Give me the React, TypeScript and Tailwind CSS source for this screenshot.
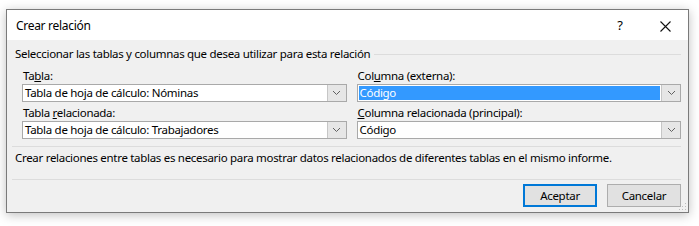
import React from "react";

const font = { fontFamily: '"Segoe UI", "Noto Sans", "Open Sans", sans-serif' };

function Chevron() {
  return (
    <svg width="9" height="6" viewBox="0 0 9 6" className="block">
      <path d="M1 1 L4.5 4.5 L8 1" fill="none" stroke="#606060" strokeWidth="1" />
    </svg>
  );
}

function Combo({ value, selected }: { value: string; selected?: boolean }) {
  return (
    <div className="flex h-[18px] border border-[#a9a9a9] bg-white">
      <div className="flex flex-1 items-center p-px">
        <div
          className={
            selected
              ? "flex h-full w-full items-center bg-[#3399ff] pl-[1px] text-white"
              : "flex h-full w-full items-center pl-[1px] text-black"
          }
        >
          {value}
        </div>
      </div>
      <div className="flex w-[19px] items-center justify-center border-l border-[#c6c6c6] bg-[#e6e6e6]">
        <Chevron />
      </div>
    </div>
  );
}

function Field({ label, value, selected }: { label: React.ReactNode; value: string; selected?: boolean }) {
  return (
    <div className="flex flex-col">
      <div className="h-[17px] leading-[17px] pl-[1px]">{label}</div>
      <Combo value={value} selected={selected} />
    </div>
  );
}

function Grip() {
  return (
    <svg width="8" height="8" viewBox="0 0 8 8" className="absolute bottom-[1px] right-[1px]">
      <rect x="6" y="0" width="1" height="1" fill="#bcbcbc" />
      <rect x="3" y="3" width="1" height="1" fill="#bcbcbc" />
      <rect x="6" y="3" width="1" height="1" fill="#bcbcbc" />
      <rect x="0" y="6" width="1" height="1" fill="#bcbcbc" />
      <rect x="3" y="6" width="1" height="1" fill="#bcbcbc" />
      <rect x="6" y="6" width="1" height="1" fill="#bcbcbc" />
    </svg>
  );
}

export default function App() {
  return (
    <div
      className="h-[226px] w-[699px] bg-white pl-[6px] pt-[9px] text-[11.5px] tracking-[-0.3px] text-black"
      style={font}
    >
      <div className="relative flex h-[204px] w-[683px] flex-col border border-[#7a7a7a] bg-[#f0f0f0] shadow-[0_2px_10px_rgba(0,0,0,0.25)]">
        <div className="flex h-[30px] items-center bg-white pl-[9px] pt-[2px]">
          <span className="flex-1 text-[12px]">Crear relación</span>
          <span className="w-[20px] text-center text-[13px]">?</span>
          <svg width="11" height="11" viewBox="0 0 11 11" className="ml-[30px] mr-[17px]">
            <path d="M0.5 0.5 L10.5 10.5 M10.5 0.5 L0.5 10.5" stroke="#111" strokeWidth="1.1" />
          </svg>
        </div>
        <div className="flex flex-1 flex-col pl-[8px] pr-[7px]">
          <div className="mt-[6px] flex h-[16px] items-center">
            <span className="whitespace-nowrap leading-[16px]">Seleccionar las tablas y columnas que desea utilizar para esta relación</span>
            <div className="ml-[4px] mt-[1px] h-px flex-1 bg-[#dcdcdc]" />
          </div>
          <div className="mt-[5px] grid grid-cols-2 gap-x-[10px] gap-y-[2px] pl-[7px]">
            <Field label={<>Ta<u>b</u>la:</>} value="Tabla de hoja de cálculo: Nóminas" />
            <Field label={<>Col<u>u</u>mna (externa):</>} value="Código" selected />
            <Field label={<>Tabla <u>r</u>elacionada:</>} value="Tabla de hoja de cálculo: Trabajadores" />
            <Field label={<><u>C</u>olumna relacionada (principal):</>} value="Código" />
          </div>
          <div className="ml-[-3px] mt-[7px] h-px bg-[#dcdcdc]" />
          <div className="mt-[2px] h-[17px] leading-[17px]">
            Crear relaciones entre tablas es necesario para mostrar datos relacionados de diferentes tablas en el mismo informe.
          </div>
          <div className="ml-[-3px] mt-[13px] h-px bg-[#dcdcdc]" />
          <div className="mt-[4px] flex justify-end gap-[10px]">
            <button className="h-[23px] w-[74px] border-2 border-[#0078d7] bg-[#e1e1e1] leading-[19px]">Aceptar</button>
            <button className="h-[23px] w-[74px] border border-[#adadad] bg-[#e1e1e1]">Cancelar</button>
          </div>
        </div>
        <Grip />
      </div>
    </div>
  );
}
